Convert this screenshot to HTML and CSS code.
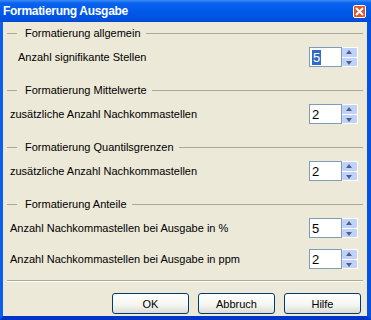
FILE: index.html
```html
<!DOCTYPE html>
<html lang="de">
<head>
  <meta charset="UTF-8">
  <title>Formatierung Ausgabe</title>
  <link rel="stylesheet" href="styles.css">
</head>
<body>
  <div class="window">
    <div class="titlebar">
      <span class="title">Formatierung Ausgabe</span>
      <span class="close">
        <svg width="9" height="9" viewBox="0 0 9 9"><path d="M1 1 L8 8 M8 1 L1 8" stroke="#fff" stroke-width="2"/></svg>
      </span>
    </div>
    <div class="frame">
      <div class="group">
        <div class="group-head"><span class="group-title">Formatierung allgemein</span></div>
        <div class="row indent">
          <span class="label">Anzahl signifikante Stellen</span>
          <div class="spin">
            <div class="spin-input"><span class="selected">5</span></div>
            <div class="spin-btns"><span class="spin-up"></span><span class="spin-down"></span></div>
          </div>
        </div>
      </div>

      <div class="group">
        <div class="group-head"><span class="group-title">Formatierung Mittelwerte</span></div>
        <div class="row">
          <span class="label">zusätzliche Anzahl Nachkommastellen</span>
          <div class="spin">
            <div class="spin-input">2</div>
            <div class="spin-btns"><span class="spin-up"></span><span class="spin-down"></span></div>
          </div>
        </div>
      </div>

      <div class="group">
        <div class="group-head"><span class="group-title">Formatierung Quantilsgrenzen</span></div>
        <div class="row">
          <span class="label">zusätzliche Anzahl Nachkommastellen</span>
          <div class="spin">
            <div class="spin-input">2</div>
            <div class="spin-btns"><span class="spin-up"></span><span class="spin-down"></span></div>
          </div>
        </div>
      </div>

      <div class="group">
        <div class="group-head"><span class="group-title">Formatierung Anteile</span></div>
        <div class="row">
          <span class="label">Anzahl Nachkommastellen bei Ausgabe in %</span>
          <div class="spin">
            <div class="spin-input">5</div>
            <div class="spin-btns"><span class="spin-up"></span><span class="spin-down"></span></div>
          </div>
        </div>
        <div class="row">
          <span class="label">Anzahl Nachkommastellen bei Ausgabe in ppm</span>
          <div class="spin">
            <div class="spin-input">2</div>
            <div class="spin-btns"><span class="spin-up"></span><span class="spin-down"></span></div>
          </div>
        </div>
      </div>

      <div class="separator"></div>

      <div class="buttons">
        <button class="btn">OK</button>
        <button class="btn">Abbruch</button>
        <button class="btn">Hilfe</button>
      </div>
    </div>
  </div>
</body>
</html>
```

FILE: styles.css
```css
* {
  box-sizing: border-box;
}
body {
  margin: 0;
  font-family: 'Liberation Sans', Arial, sans-serif;
  font-size: 11px;
  color: #000;
}
.window {
  width: 371px;
  height: 320px;
  display: flex;
  flex-direction: column;
  background: #0a5ae8;
}
.titlebar {
  height: 22px;
  display: flex;
  align-items: center;
  justify-content: space-between;
  padding: 0 5px 0 3px;
  background: linear-gradient(#3b8cf5 0, #0a62ef 3px, #0058e8 12px, #0050dc 20px, #0048cf 22px);
}
.title {
  color: #fff;
  font-weight: bold;
  font-size: 12px;
  letter-spacing: -0.3px;
}
.close {
  width: 13px;
  height: 13px;
  border: 1px solid #fff;
  border-radius: 2px;
  background: #e2542a;
  display: flex;
  align-items: center;
  justify-content: center;
}
.close svg {
  display: block;
}
.frame {
  flex: 1;
  background: #ece9d8;
  border-left: 3px solid #0a5fef;
  border-right: 4px solid #0750e0;
  border-bottom: 4px solid #0035c8;
  padding-top: 4px;
}
.group + .group {
  margin-top: 16px;
}
.group-head {
  height: 14px;
  display: flex;
  align-items: center;
  margin: 0 4px 7px 4px;
}
.group-head::before {
  content: "";
  width: 10px;
  border-top: 1px solid #aca899;
  margin-right: 8px;
}
.group-head::after {
  content: "";
  flex: 1;
  border-top: 1px solid #aca899;
  margin-left: 5px;
}
.row {
  height: 20px;
  display: flex;
  align-items: center;
  justify-content: space-between;
  padding: 0 9px 0 7px;
}
.row + .row {
  margin-top: 11px;
}
.row.indent {
  padding-left: 15px;
}
.spin {
  display: flex;
  height: 20px;
}
.spin-input {
  width: 33px;
  height: 20px;
  background: #fff;
  border: 1px solid #7f9db9;
  padding: 2px 0 0 2px;
  font-size: 13px;
  line-height: 15px;
}
.selected {
  display: inline-block;
  background: #316ac5;
  color: #fff;
  padding: 0 1px;
}
.spin-btns {
  width: 16px;
  display: flex;
  flex-direction: column;
  background: #fff;
  padding: 1px 1px 1px 0;
  gap: 1px;
}
.spin-up, .spin-down {
  flex: 1;
  background: #c0d1fa;
  border-radius: 1px;
  position: relative;
}
.spin-up::after, .spin-down::after {
  content: "";
  position: absolute;
  left: 4px;
  width: 0;
  height: 0;
  border-left: 3.5px solid transparent;
  border-right: 3.5px solid transparent;
}
.spin-up::after {
  top: 2px;
  border-bottom: 4px solid #4d6185;
}
.spin-down::after {
  top: 3px;
  border-top: 4px solid #4d6185;
}
.separator {
  margin: 11px 4px 0 4px;
  border-top: 1px solid #aca899;
  border-bottom: 1px solid #fff;
}
.buttons {
  display: flex;
  justify-content: flex-end;
  gap: 9px;
  padding: 11px 6px 0 0;
}
.btn {
  width: 77px;
  height: 21px;
  border: 1px solid #003c74;
  border-radius: 3px;
  background: linear-gradient(#ffffff, #f4f4f0 60%, #dcdbd3);
  font-family: 'Liberation Sans', Arial, sans-serif;
  font-size: 11px;
  color: #000;
  padding: 0;
}
```
